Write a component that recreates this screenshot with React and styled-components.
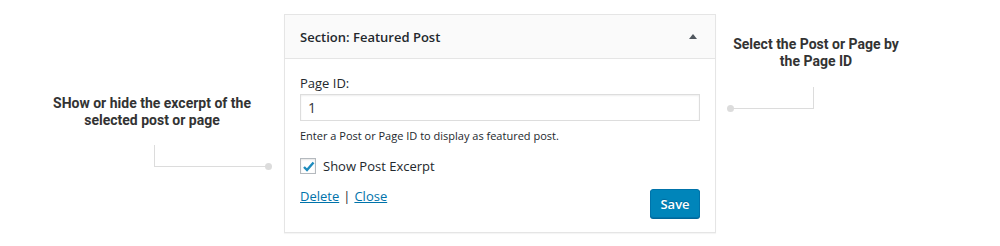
import React from "react";
import styled, { createGlobalStyle } from "styled-components";

const Global = createGlobalStyle`
  html, body { margin: 0; padding: 0; background: #fff; }
  body { font-family: "Open Sans", "Noto Sans", sans-serif; }
`;

const Page = styled.div`
  width: 1000px;
  height: 246px;
  display: flex;
  align-items: flex-start;
  background: #fff;
  overflow: hidden;
`;

const Side = styled.div`
  width: ${(p) => p.$width}px;
  flex: none;
  display: flex;
  flex-direction: column;
  padding-top: ${(p) => p.$top}px;
  padding-left: ${(p) => p.$left}px;
  box-sizing: border-box;
`;

const Note = styled.div`
  width: ${(p) => p.$width}px;
  font-family: Roboto, "Liberation Sans", sans-serif;
  font-weight: 700;
  font-size: 14px;
  line-height: 17px;
  color: #333;
  text-align: center;
`;

const Connector = styled.div`
  position: relative;
  box-sizing: border-box;
  margin-left: ${(p) => p.$offset}px;
  margin-top: ${(p) => p.$gap}px;
  width: ${(p) => p.$width}px;
  height: ${(p) => p.$height}px;
  border-bottom: 1px solid #dcdcdc;
  ${(p) => (p.$dotSide === "right" ? "border-left" : "border-right")}: 1px solid #dcdcdc;

  &::after {
    content: "";
    position: absolute;
    bottom: -4px;
    ${(p) => (p.$dotSide === "right" ? "right: -4px" : "left: -4px")};
    width: 7px;
    height: 7px;
    border-radius: 50%;
    background: #dcdcdc;
  }
`;

const Panel = styled.div`
  width: 432px;
  flex: none;
  margin-top: 14px;
  box-sizing: border-box;
  border: 1px solid #e5e5e5;
  background: #fff;
  box-shadow: 0 1px 1px rgba(0, 0, 0, 0.04);
`;

const Header = styled.div`
  height: 43px;
  display: flex;
  align-items: center;
  justify-content: space-between;
  padding: 0 18px 0 15px;
  background: #fafafa;
  border-bottom: 1px solid #e5e5e5;
`;

const Title = styled.h3`
  margin: 0;
  font-size: 13px;
  font-weight: 600;
  color: #23282d;
`;

const Arrow = styled.span`
  width: 0;
  height: 0;
  border-left: 4px solid transparent;
  border-right: 4px solid transparent;
  border-bottom: 5px solid #50575e;
`;

const Body = styled.div`
  padding: 14px 15px 14px 15px;
  display: flex;
  flex-direction: column;
  align-items: flex-start;
`;

const Label = styled.label`
  font-size: 13px;
  line-height: 20px;
  color: #23282d;
`;

const Input = styled.div`
  box-sizing: border-box;
  width: 400px;
  height: 27px;
  margin-top: 1px;
  padding: 0 7px;
  display: flex;
  align-items: center;
  border: 1px solid #ddd;
  box-shadow: inset 0 1px 2px rgba(0, 0, 0, 0.07);
  font-size: 14px;
  color: #32373c;
`;

const Help = styled.p`
  margin: 7px 0 0;
  font-size: 11px;
  line-height: 16px;
  color: #23282d;
`;

const CheckRow = styled.div`
  margin-top: 13px;
  display: flex;
  align-items: center;
  gap: 7px;
  font-size: 13px;
  color: #23282d;
`;

const Box = styled.span`
  box-sizing: border-box;
  width: 16px;
  height: 16px;
  border: 1px solid #b4b9be;
  box-shadow: inset 0 1px 2px rgba(0, 0, 0, 0.1);
  display: flex;
  align-items: center;
  justify-content: center;
`;

const Footer = styled.div`
  align-self: stretch;
  margin-top: 13px;
  display: flex;
  justify-content: space-between;
  align-items: flex-start;
`;

const Links = styled.div`
  font-size: 13px;
  line-height: 17px;
  color: #23282d;
  display: flex;
  gap: 4px;
`;

const Link = styled.a`
  color: #0073aa;
  text-decoration: underline;
  cursor: pointer;
`;

const Button = styled.button`
  box-sizing: border-box;
  margin-top: 1px;
  width: 50px;
  height: 29px;
  padding: 0;
  border: 1px solid #0073aa;
  border-radius: 3px;
  background: #0085ba;
  box-shadow: 0 1px 0 #006799;
  color: #fff;
  font-family: "Open Sans", sans-serif;
  font-size: 13px;
  font-weight: 600;
  text-shadow: 0 -1px 1px #006799;
`;

export default function App() {
  return (
    <>
      <Global />
      <Page>
        <Side $width={284} $top={95} $left={52}>
          <Note $width={200}>
            SHow or hide the excerpt of the
            <br />
            selected post or page
          </Note>
          <Connector $offset={102} $gap={16} $width={114} $height={22} $dotSide="right" />
        </Side>
        <Panel>
          <Header>
            <Title>Section: Featured Post</Title>
            <Arrow />
          </Header>
          <Body>
            <Label>Page ID:</Label>
            <Input>1</Input>
            <Help>Enter a Post or Page ID to display as featured post.</Help>
            <CheckRow>
              <Box>
                <svg width="13" height="13" viewBox="0 0 13 13">
                  <path d="M2 7 L5 10 L11.5 2.5" fill="none" stroke="#1e8cbe" strokeWidth="2.4" />
                </svg>
              </Box>
              Show Post Excerpt
            </CheckRow>
            <Footer>
              <Links>
                <Link>Delete</Link>|<Link>Close</Link>
              </Links>
              <Button>Save</Button>
            </Footer>
          </Body>
        </Panel>
        <Side $width={284} $top={36} $left={15}>
          <Note $width={170}>
            Select the Post or Page by
            <br />
            the Page ID
          </Note>
          <Connector $offset={0} $gap={17} $width={83} $height={22} $dotSide="left" />
        </Side>
      </Page>
    </>
  );
}
